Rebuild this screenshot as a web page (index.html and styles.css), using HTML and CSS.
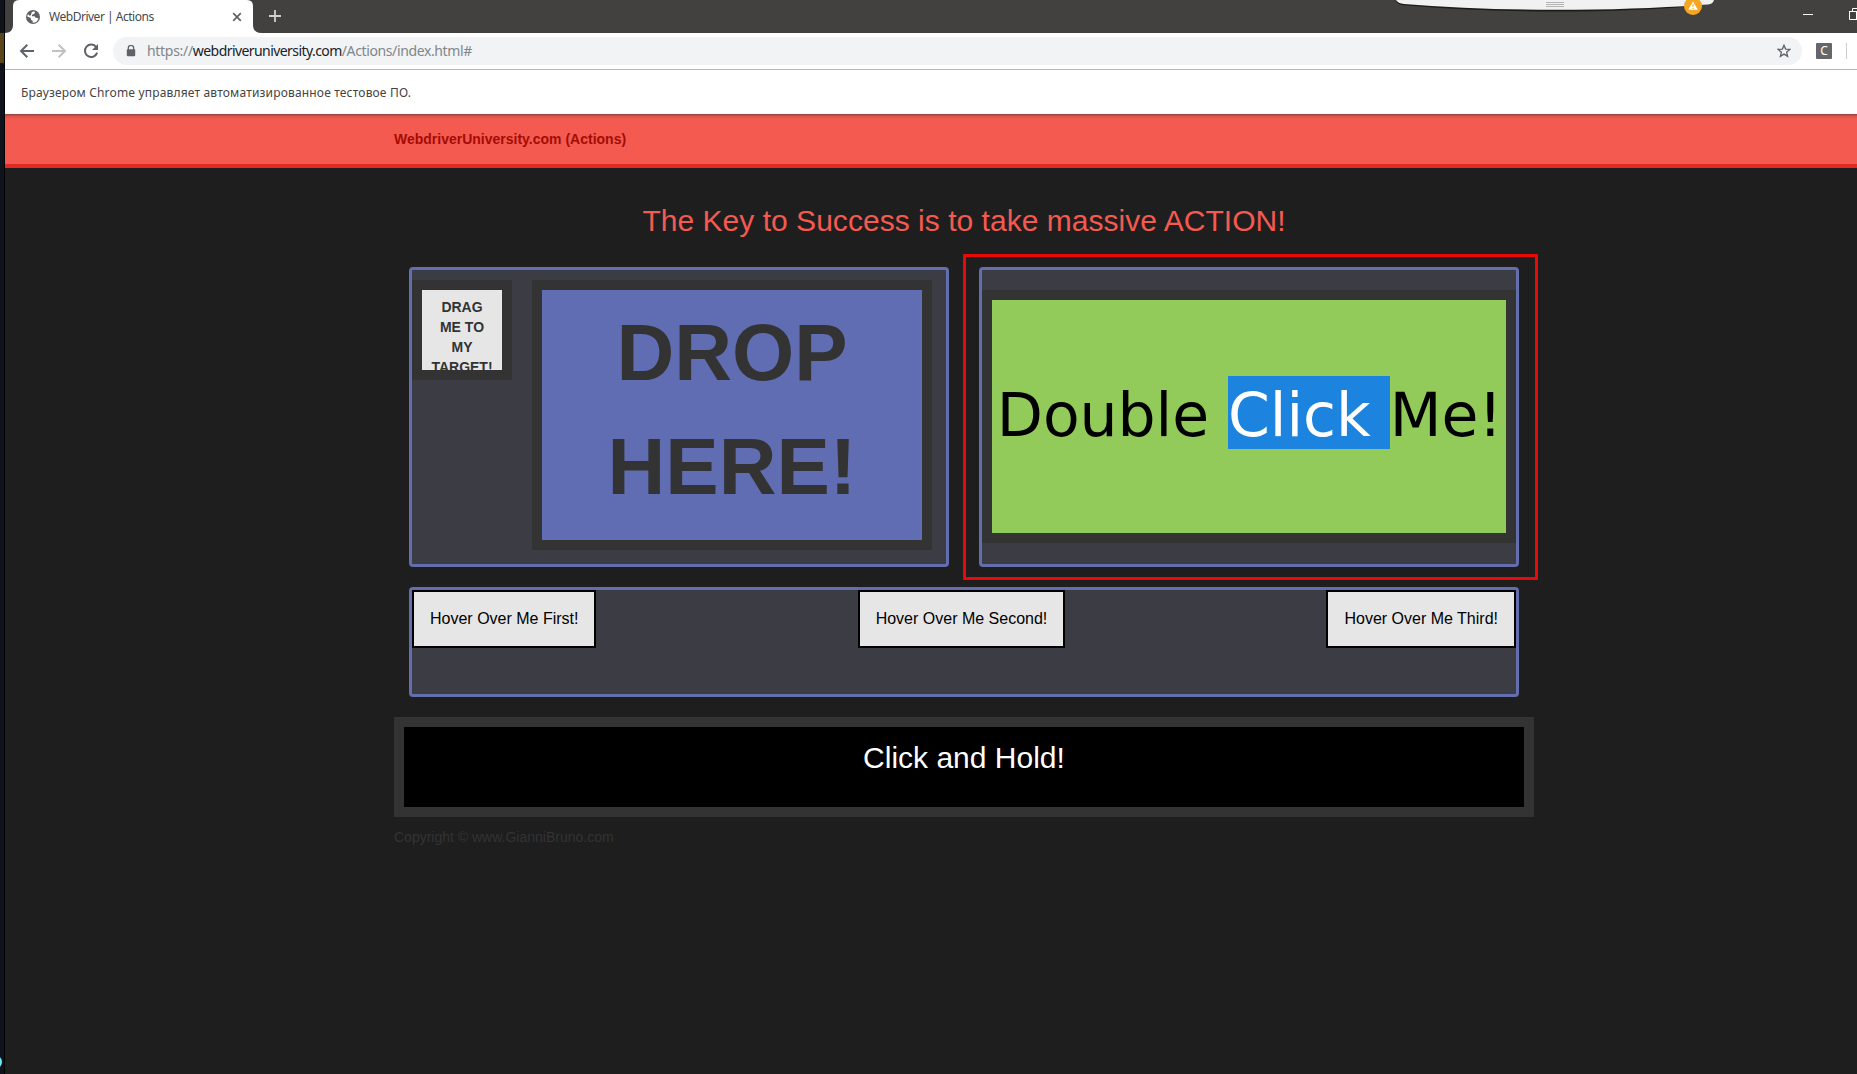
FILE: index.html
```html
<!DOCTYPE html>
<html lang="ru">
<head>
<meta charset="utf-8">
<title>WebDriver | Actions</title>
<link rel="stylesheet" href="styles.css">
</head>
<body>
<div class="desktop-edge"></div>
<div class="window">
  <div class="tabstrip">
    <svg class="tab-shape" width="260" height="33" viewBox="0 0 260 33"><path d="M0 33C5 33 8 30 8 25V6Q8 0 14 0H242Q248 0 248 6V25C248 30 251 33 256 33Z" fill="#fff"/></svg>
    <div class="tab">
      <svg width="16" height="16" viewBox="0 0 16 16"><circle cx="8" cy="8" r="7" fill="#5f6368"/><path d="M8 2.4 9.6 2.6 9.9 4 8.6 5.2 7.2 5.4 6.8 7.2 9.6 7.2 10.6 8.8 13.4 9.2A5.8 5.8 0 0 1 7.6 13.7L7.8 12 6 10.8 5.8 9 2.3 7.6A5.8 5.8 0 0 1 2.9 5.3L5 7 6.2 5.6 6.6 3.6Z" fill="#fff"/></svg>
      <span class="tab-title">WebDriver | Actions</span>
      <svg class="tab-close" width="10" height="10" viewBox="0 0 10 10"><path d="M1.2 1.2 8.8 8.8M8.8 1.2 1.2 8.8" stroke="#5f6368" stroke-width="1.7"/></svg>
    </div>
    <svg class="new-tab" width="12" height="12" viewBox="0 0 12 12"><path d="M6 0V12M0 6H12" stroke="#d0d0d0" stroke-width="1.8"/></svg>
    <svg class="controls" width="54" height="12" viewBox="0 0 54 12"><path d="M0 6.5H10M46.5 3.5H54M46.5 3V11.5H54M49.5 3V.5H54M53.5 3V12" fill="none" stroke="#fff"/></svg>
  </div>
  <div class="toolbar">
    <svg class="nav" width="16" height="16" viewBox="0 0 16 16"><path d="M15 8H2M8.3 1.7 2 8 8.3 14.3" fill="none" stroke="#5f6368" stroke-width="2"/></svg>
    <svg class="nav" width="16" height="16" viewBox="0 0 16 16"><path d="M1 8H14M7.7 1.7 14 8 7.7 14.3" fill="none" stroke="#bfc1c3" stroke-width="2"/></svg>
    <svg class="nav" width="16" height="16" viewBox="0 0 16 16"><path d="M13.2 4.2A6.2 6.2 0 1 0 14.1 9.6" fill="none" stroke="#5f6368" stroke-width="2"/><path d="M15 1V7H9Z" fill="#5f6368"/></svg>
    <div class="omnibox">
      <svg width="10" height="12" viewBox="0 0 10 12"><path d="M2.3 5V3.1A2.6 2.6 0 0 1 7.7 3.1V5" fill="none" stroke="#5f6368" stroke-width="1.3"/><rect x=".8" y="4.2" width="8.4" height="7" rx="1" fill="#5f6368"/></svg>
      <span class="url"><span class="scheme">https://</span><span class="domain">webdriveruniversity.com</span><span class="path">/Actions/index.html#</span></span>
      <svg class="star" width="14" height="14" viewBox="0 0 14 14"><path d="M7 1.2 8.6 5.1 12.9 5.4 9.6 8.2 10.6 12.4 7 10.1 3.4 12.4 4.4 8.2 1.1 5.4 5.4 5.1Z" fill="none" stroke="#5f6368" stroke-width="1.3"/></svg>
    </div>
    <span class="extension">C</span>
    <span class="divider"></span>
  </div>
  <div class="infobar">Браузером Chrome управляет автоматизированное тестовое ПО.</div>
  <div class="header"><div class="container">WebdriverUniversity.com (Actions)</div></div>
  <div class="container page">
    <h1 class="title">The Key to Success is to take massive ACTION!</h1>
    <div class="row">
      <div class="panel drag-panel">
        <div class="drag">DRAG ME TO MY TARGET!</div>
        <div class="drop">DROP<br>HERE!</div>
      </div>
      <div class="panel click-panel">
        <div class="double"><span>Double </span><span class="selected">Click </span><span>Me!</span></div>
        <div class="highlight"></div>
      </div>
    </div>
    <div class="panel hover-panel">
      <div class="hover">Hover Over Me First!</div>
      <div class="hover">Hover Over Me Second!</div>
      <div class="hover">Hover Over Me Third!</div>
    </div>
    <div class="hold">Click and Hold!</div>
    <div class="copyright">Copyright © www.GianniBruno.com</div>
  </div>
</div>
<svg class="drawer" width="330" height="18" viewBox="0 0 330 18">
  <path d="M6 0V1Q8 5 14 5.2Q85 11.4 165 11.4Q245 11.4 310 5.4Q322 4 323 0Z" fill="#1c1c1a"/>
  <path d="M6 0Q8 3.6 14 3.9Q85 9.7 165 9.7Q245 9.7 310 4.9L318 4.6Q323 4 324 0Z" fill="#f1f1f1"/>
  <path d="M156 2.5H174M156 4.5H174M156 6.5H174" stroke="#b4b4b4"/>
  <circle cx="303" cy="6" r="9" fill="#f5a623"/><path d="M303 1.5 307.8 9.8H298.2Z" fill="#fff"/><path d="M303 4V7M303 8V9" stroke="#f5a623"/>
</svg>
<div class="cursor-dot"></div>
</body>
</html>
```
FILE: styles.css
```css
* { box-sizing: border-box; }
body { margin: 0; width: 1857px; height: 1074px; overflow: hidden; display: flex; position: relative; background: #1e1e1e; font-family: "Liberation Sans", Arial, sans-serif; }
.desktop-edge { width: 5px; flex: none; border-right: 1px solid #000; background: linear-gradient(#10121c 33px, #594719 33px, #594719 63px, #10121c 63px); }
.window { flex: 1; min-width: 0; }
.tabstrip { height: 33px; background: #42413f; display: flex; align-items: center; position: relative; }
.tab-shape { position: absolute; left: 0; top: 0; }
.tab { position: relative; width: 256px; height: 33px; padding: 0 19px 0 20px; display: flex; align-items: center; font: 12px "Noto Sans", sans-serif; color: #45494d; }
.tab-title { margin-left: 8px; line-height: 32px; letter-spacing: -.48px; white-space: nowrap; }
.tab-close { margin-left: auto; }
.new-tab { margin-left: 8px; margin-top: -1px; }
.controls { margin-left: auto; margin-top: -6px; }
.toolbar { height: 37px; background: #fff; border-bottom: 1px solid #b4b5b5; display: flex; align-items: center; padding-left: 14px; }
.nav { margin-right: 16px; }
.omnibox { width: 1689px; height: 28px; border-radius: 14px; background: #f1f3f4; display: flex; align-items: center; padding: 0 11px 0 13px; margin-left: -2px; }
.url { margin-left: 11px; font: 14px/28px "Noto Sans", sans-serif; color: #80868b; white-space: nowrap; display: flex; }
.scheme { letter-spacing: -.3px; }
.path { letter-spacing: -.38px; }
.domain { color: #202124; letter-spacing: -.57px; }
.star { margin-left: auto; }
.extension { width: 16px; height: 16px; margin-left: 14px; border-radius: 1px; background: #666; color: #fff; font: 12px/16px "Noto Sans", sans-serif; text-align: center; }
.divider { width: 1px; height: 16px; background: #ccc; margin-left: 14px; }
.infobar { height: 44px; background: #fff; padding-left: 16px; font: 12px/46px "Noto Sans", sans-serif; color: #444; letter-spacing: .17px; white-space: nowrap; }
.header { height: 54px; background: linear-gradient(#913b36, #d8524a 2px, #f45a50 5px); border-bottom: 4px solid #e12b21; color: #a40c04; font: bold 14px/50px "Liberation Sans", Arial, sans-serif; }
.container { width: 1140px; margin-left: 389px; }
.title { height: 99px; margin: 0; padding-top: 36px; font-weight: 400; font-size: 30px; line-height: 34px; letter-spacing: .03px; color: #f45a50; text-align: center; }
.row { display: flex; gap: 30px; padding: 0 15px; }
.panel { background: #3c3c45; border: 3px solid #626eae; border-radius: 4px; }
.drag-panel, .click-panel { width: 540px; height: 300px; position: relative; }
.drag-panel { display: flex; gap: 20px; padding-top: 10px; }
.drag { width: 100px; height: 100px; overflow: hidden; border: 10px solid #333; background: #e6e6e6; padding: 7px 8px 0; font: bold 14px/20px "Liberation Sans", Arial, sans-serif; color: #333; text-align: center; }
.drop { width: 400px; height: 270px; border: 10px solid #333; background: #606db3; color: #333; font: bold 80px/114px "Liberation Sans", Arial, sans-serif; text-align: center; padding-top: 6px; }
.click-panel { padding-top: 20px; }
.double { height: 253px; border: 10px solid #333; background: #92cb5a; display: flex; justify-content: center; align-items: center; padding: 0 0 8px 1px; font: 60px/79px "DejaVu Sans", Verdana, sans-serif; letter-spacing: -.06px; color: #000; white-space: pre; }
.double span { height: 73px; }
.selected { background: #1c84de; color: #fff; }
.highlight { position: absolute; left: -19px; top: -16px; width: 575px; height: 326px; border: 3px solid #ea0808; border-radius: 1px; }
.hover-panel { height: 110px; margin: 20px 15px; display: flex; justify-content: space-between; align-items: flex-start; }
.hover { height: 58px; padding: 0 16px; border: 2px solid #000; background: #e6e6e6; font-size: 16px; line-height: 54px; white-space: nowrap; color: #000; }
.hold { height: 100px; border: 10px solid #333; background: #000; color: #fff; text-align: center; font-size: 30px; line-height: 62px; }
.copyright { color: #333; font-size: 14px; line-height: 20px; margin-top: 10px; }
.drawer { position: absolute; left: 1390px; top: 0; }
.cursor-dot { position: absolute; left: -8px; top: 1056px; width: 10px; height: 12px; border-radius: 50%; background: #72e4ef; }
```
